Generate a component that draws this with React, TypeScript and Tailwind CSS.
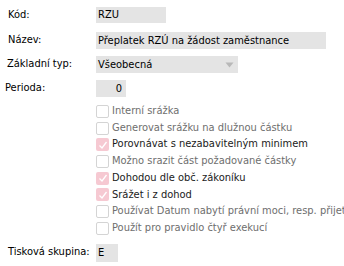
import { useState } from "react";

interface Option {
  label: string;
  checked: boolean;
}

const options: Option[] = [
  { label: "Interní srážka", checked: false },
  { label: "Generovat srážku na dlužnou částku", checked: false },
  { label: "Porovnávat s nezabavitelným minimem", checked: true },
  { label: "Možno srazit část požadované částky", checked: false },
  { label: "Dohodou dle obč. zákoníku", checked: true },
  { label: "Srážet i z dohod", checked: true },
  { label: "Používat Datum nabytí právní moci, resp. přijetí návrhu", checked: false },
  { label: "Použít pro pravidlo čtyř exekucí", checked: false },
];

const CheckBox = ({ checked }: { checked: boolean }) =>
  checked ? (
    <span className="w-[13px] h-[13px] shrink-0 rounded-[2px] bg-[#f6c9d2] flex items-center justify-center">
      <svg width="10" height="10" viewBox="0 0 10 10">
        <path d="M1.5 5.5 L4 8 L8.5 2" fill="none" stroke="#ffffff" strokeWidth="1.3" />
      </svg>
    </span>
  ) : (
    <span className="w-[13px] h-[13px] shrink-0 rounded-[2px] border border-[#d4d4d4] bg-white" />
  );

export default function App() {
  const [items] = useState(options);

  return (
    <div
      className="w-[344px] h-[266px] bg-white text-[11px] text-black overflow-hidden relative"
      style={{ fontFamily: "'DejaVu Sans Condensed', 'Liberation Sans', sans-serif" }}
    >
      <div className="flex items-center h-[16px] mt-[7px]">
        <span className="w-[96px] shrink-0 pl-[8px]">Kód:</span>
        <div className="w-[70px] h-[16px] bg-[#e4e4e4] pl-[2px] leading-[16px]">RZU</div>
      </div>
      <div className="flex items-center h-[17px] mt-[9px]">
        <span className="w-[96px] shrink-0 pl-[8px]">Název:</span>
        <div className="w-[230px] h-[17px] bg-[#e4e4e4] pl-[2px] leading-[17px] whitespace-nowrap">
          Přeplatek RZÚ na žádost zaměstnance
        </div>
      </div>
      <div className="flex items-center h-[17px] mt-[7px]">
        <span className="w-[96px] shrink-0 pl-[7px]">Základní typ:</span>
        <div className="w-[142px] h-[17px] bg-[#e4e4e4] pl-[2px] leading-[17px] flex items-center justify-between pr-[4px]">
          <span>Všeobecná</span>
          <svg width="9" height="6" viewBox="0 0 9 6">
            <path d="M0.5 0.5 L8.5 0.5 L4.5 5.5 Z" fill="#b8b8b8" />
          </svg>
        </div>
      </div>
      <div className="flex items-center h-[17px] mt-[7px]">
        <span className="w-[96px] shrink-0 pl-[5px]">Perioda:</span>
        <div className="w-[30px] h-[17px] bg-[#e4e4e4] pr-[4px] leading-[17px] text-right">0</div>
      </div>
      <div className="flex flex-col pl-[96px] mt-[6px]">
        {items.map((o) => (
          <div key={o.label} className="flex items-center h-[16.7px] gap-[3px] whitespace-nowrap w-max">
            <CheckBox checked={o.checked} />
            <span className={o.checked ? "text-[#1a1a1a]" : "text-[#6e6e6e]"}>{o.label}</span>
          </div>
        ))}
      </div>
      <div className="flex items-center h-[18px] mt-[7px]">
        <span className="w-[96px] shrink-0 pl-[8px] whitespace-nowrap">Tisková skupina:</span>
        <div className="w-[22px] h-[18px] bg-[#e4e4e4] pl-[2px] leading-[18px]">E</div>
      </div>
    </div>
  );
}
